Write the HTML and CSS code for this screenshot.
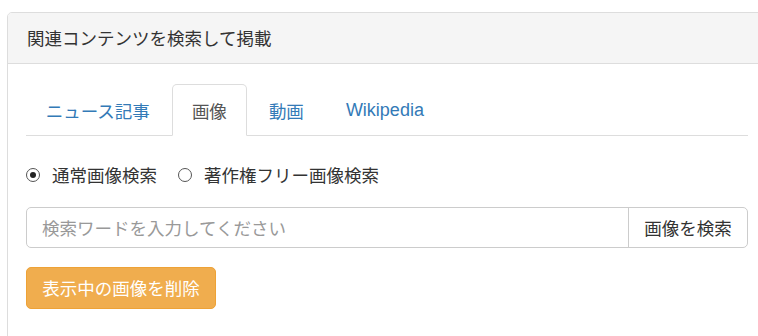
FILE: index.html
```html
<!DOCTYPE html>
<html lang="ja">
<head>
<meta charset="utf-8">
<link rel="stylesheet" href="styles.css">
</head>
<body>
<div class="wrap">
  <div class="panel">
    <div class="panel-heading">関連コンテンツを検索して掲載</div>
    <div class="panel-body">
      <ul class="tabs">
        <li class="tab"><a class="tab-link">ニュース記事</a></li>
        <li class="tab active"><a class="tab-link">画像</a></li>
        <li class="tab"><a class="tab-link">動画</a></li>
        <li class="tab"><a class="tab-link wiki">Wikipedia</a></li>
      </ul>
      <div class="radios">
        <label class="radio"><span class="circle checked"></span><span>通常画像検索</span></label>
        <label class="radio"><span class="circle"></span><span>著作権フリー画像検索</span></label>
      </div>
      <div class="input-group">
        <div class="input">検索ワードを入力してください</div>
        <div class="btn-default">画像を検索</div>
      </div>
      <div class="btn-warning">表示中の画像を削除</div>
    </div>
  </div>
</div>
</body>
</html>
```

FILE: styles.css
```css
html, body {
  margin: 0;
  padding: 0;
  overflow: hidden;
  background: #fff;
}
body {
  font-family: "Noto Sans CJK JP", "Noto Sans", sans-serif;
  font-size: 17.5px;
  color: #333;
}
.wrap {
  padding: 12px 0 0 7px;
}
.panel {
  width: 760px;
  box-sizing: border-box;
  border: 1px solid #ddd;
  border-radius: 5px;
  height: 340px;
}
.panel-heading {
  background: #f5f5f5;
  border-bottom: 1px solid #ddd;
  border-radius: 4px 4px 0 0;
  height: 50px;
  line-height: 50px;
  padding: 0 19px;
  color: #333;
}
.panel-body {
  padding: 20px 18px 18px 18px;
}
.tabs {
  list-style: none;
  margin: 0;
  padding: 0;
  display: flex;
  border-bottom: 1px solid #ddd;
}
.tab {
  margin-bottom: -1px;
  margin-right: 2.5px;
}
.tab-link {
  display: block;
  padding: 12.5px 18.75px;
  line-height: 25px;
  border: 1px solid transparent;
  border-radius: 5px 5px 0 0;
  color: #337ab7;
}
.tab.active .tab-link {
  color: #555;
  background: #fff;
  border-color: #ddd #ddd transparent;
}
.wiki {
  font-family: "Liberation Sans", Arial, sans-serif;
  font-size: 18px;
}
.radios {
  display: flex;
  align-items: center;
  margin-top: 26px;
  height: 25px;
  line-height: 25px;
  gap: 21px;
}
.radio {
  display: flex;
  align-items: center;
  gap: 12px;
}
.circle {
  width: 14px;
  height: 14px;
  box-sizing: border-box;
  border: 1px solid #555;
  border-radius: 50%;
  position: relative;
  background: #fff;
}
.circle.checked::after {
  content: "";
  position: absolute;
  left: 3px;
  top: 3px;
  width: 6px;
  height: 6px;
  border-radius: 50%;
  background: #222;
}
.input-group {
  display: flex;
  margin-top: 20px;
  height: 41px;
  box-sizing: border-box;
  border: 1px solid #ccc;
  border-radius: 5px;
}
.input {
  flex: 1;
  padding: 0 15px;
  line-height: 39px;
  color: #999;
}
.btn-default {
  border-left: 1px solid #ccc;
  padding: 0 15px;
  line-height: 39px;
  color: #333;
  width: 88px;
  text-align: center;
}
.btn-warning {
  margin-top: 19px;
  width: 190px;
  height: 42px;
  box-sizing: border-box;
  line-height: 40px;
  text-align: center;
  background: #f0ad4e;
  border: 1px solid #eea236;
  border-radius: 5px;
  color: #fff;
}
```
